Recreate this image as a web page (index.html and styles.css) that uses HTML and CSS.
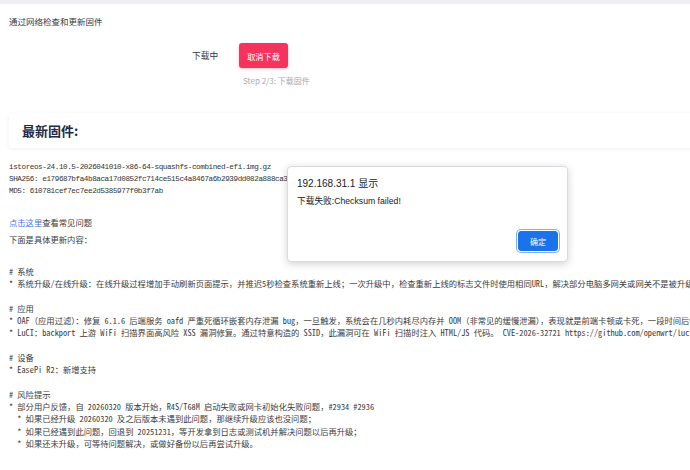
FILE: index.html
```html
<!DOCTYPE html>
<html lang="zh-CN">
<head>
<meta charset="utf-8">
<title>固件更新</title>
<link rel="stylesheet" href="styles.css">
</head>
<body>
<div class="page">
  <div class="topbar"></div>
  <div class="intro">通过网络检查和更新固件</div>
  <div class="download-row">
    <span class="status">下载中</span>
    <button class="btn-cancel">取消下载</button>
  </div>
  <div class="step">Step 2/3: 下载固件</div>

  <div class="card">
    <h2 class="card-title">最新固件:</h2>
  </div>

  <div class="notes">
<pre class="mono hashes">istoreos-24.10.5-2026041010-x86-64-squashfs-combined-efi.img.gz
SHA256: e179687bfa4b8aca17d0852fc714ce515c4a8467a6b2939dd082a888ca3f1e2d
MD5: 610781cef7ec7ee2d5385977f0b3f7ab</pre>
    <p class="line first"><a class="link" href="#">点击这里</a>查看常见问题</p>
    <p class="line">下面是具体更新内容：</p>
<pre class="mono changelog"># 系统
* 系统升级/在线升级：在线升级过程增加手动刷新页面提示，并推迟5秒检查系统重新上线；一次升级中，检查重新上线的标志文件时使用相同URL，解决部分电脑多网关或网关不是被升级设备时的问题

# 应用
* OAF（应用过滤）：修复 6.1.6 后端服务 oafd 严重死循环嵌套内存泄漏 bug，一旦触发，系统会在几秒内耗尽内存并 OOM（非常见的缓慢泄漏），表现就是前端卡顿或卡死，一段时间后恢复
* LuCI：backport 上游 WiFi 扫描界面高风险 XSS 漏洞修复。通过特意构造的 SSID，此漏洞可在 WiFi 扫描时注入 HTML/JS 代码。 CVE-2026-32721 https://github.com/openwrt/luci/commit

# 设备
* EasePi R2：新增支持

# 风险提示
* 部分用户反馈，自 20260320 版本开始，R4S/T68M 启动失败或网卡初始化失败问题，#2934 #2936
  * 如果已经升级 20260320 及之后版本未遇到此问题，那继续升级应该也没问题；
  * 如果已经遇到此问题，回退到 20251231，等开发拿到日志或测试机并解决问题以后再升级；
  * 如果还未升级，可等待问题解决，或做好备份以后再尝试升级。</pre>
  </div>
</div>

<div class="alert" role="alertdialog">
  <div class="alert-title">192.168.31.1 显示</div>
  <div class="alert-msg">下载失败:Checksum failed!</div>
  <div class="alert-actions">
    <button class="btn-ok">确定</button>
  </div>
</div>
</body>
</html>
```

FILE: styles.css
```css
html, body {
  margin: 0;
  padding: 0;
  background: #ffffff;
}

body {
  width: 690px;
  height: 470px;
  overflow: hidden;
  position: relative;
  font-family: "Noto Sans CJK SC", "Liberation Sans", sans-serif;
  color: #333333;
}

.page {
  width: 1200px;
}

.topbar {
  height: 4px;
  background: #eef0f3;
}

.intro {
  margin: 11px 0 0 9px;
  font-size: 8.5px;
  line-height: 12px;
  color: #3b3b3b;
}

.download-row {
  display: flex;
  align-items: center;
  gap: 21px;
  margin-top: 16px;
  padding-left: 192px;
  height: 25px;
}

.status {
  font-size: 8.7px;
  color: #333a48;
}

.btn-cancel {
  width: 49px;
  height: 25px;
  border: none;
  border-radius: 3px;
  background: #f5335d;
  color: #ffffff;
  font-family: inherit;
  font-size: 8.2px;
  padding: 0;
  box-shadow: 0 1px 3px rgba(245, 51, 93, 0.35);
}

.step {
  margin: 7px 0 0 243px;
  font-size: 8px;
  line-height: 12px;
  color: #a3aab8;
}

.card {
  margin: 26px 0 0 9px;
  height: 35px;
  width: 1100px;
  background: #ffffff;
  border-radius: 4px;
  box-shadow: 0 1px 4px rgba(0, 0, 0, 0.07);
  display: flex;
  align-items: center;
}

.card-title {
  margin: 0 0 0 13px;
  font-size: 13px;
  font-weight: 700;
  color: #1f2a48;
}

.notes {
  margin: 11px 0 0 9px;
  font-family: "Noto Sans Mono CJK SC", "Noto Sans CJK SC", "Liberation Mono", monospace;
  font-size: 8.3px;
  color: #3c3c3c;
}

.mono {
  margin: 0;
  font-family: inherit;
  font-size: 8.3px;
  line-height: 12.3px;
  white-space: pre;
}

/* file name and checksums are plain ASCII: half-width monospace cells */
.mono.hashes {
  padding-top: 1.5px;
  font-family: "Liberation Mono", monospace;
  font-size: 7.6px;
  letter-spacing: -0.4px;
  line-height: 12.4px;
  color: #333333;
}

.line {
  margin: 4.6px 0 0;
  line-height: 12.4px;
}

.line.first {
  margin-top: 18.1px;
}

.link {
  color: #4a74d8;
  text-decoration: none;
}

.changelog {
  margin-top: 19.6px;
}

/* browser alert box */
.alert {
  position: absolute;
  left: 287px;
  top: 166px;
  width: 281px;
  height: 96px;
  box-sizing: border-box;
  background: #ffffff;
  border: 1px solid #d9dbe0;
  border-radius: 4px;
  box-shadow: 0 2px 8px rgba(0, 0, 0, 0.18);
  font-family: "Liberation Sans", "Noto Sans CJK SC", sans-serif;
  display: flex;
  flex-direction: column;
  padding: 10px 9px 10px 9px;
}

.alert-title {
  font-size: 10px;
  line-height: 14px;
  color: #202124;
}

.alert-msg {
  margin-top: 4px;
  font-size: 8.7px;
  line-height: 12px;
  color: #202124;
}

.alert-actions {
  margin-top: auto;
  display: flex;
  justify-content: flex-end;
}

.btn-ok {
  width: 40px;
  height: 20px;
  padding: 0;
  border: 1px solid #1a73e8;
  border-radius: 3px;
  background: #1a73e8;
  color: #ffffff;
  font-family: "Noto Sans CJK SC", sans-serif;
  font-size: 8px;
  box-shadow: 0 0 0 1px #ffffff, 0 0 0 2px #7fb0f3;
}
```
